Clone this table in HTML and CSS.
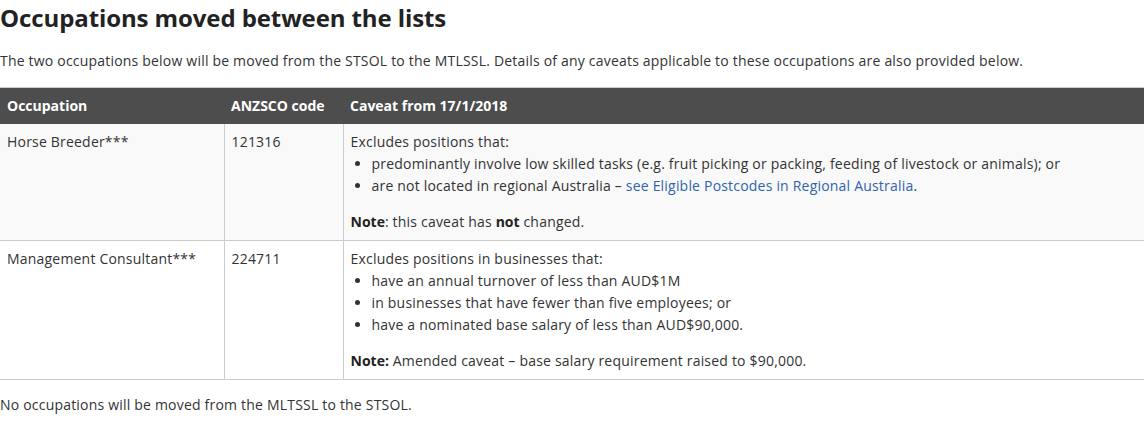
FILE: index.html
```html
<!DOCTYPE html>
<html lang="en">
<head>
<meta charset="utf-8">
<title>Occupations moved between the lists</title>
<link rel="stylesheet" href="styles.css">
</head>
<body>
<h2 class="title">Occupations moved between the lists</h2>
<p class="intro">The two occupations below will be moved from the STSOL to the MTLSSL. Details of any caveats applicable to these occupations are also provided below.</p>
<table class="occ-table">
  <colgroup>
    <col class="c1">
    <col class="c2">
    <col class="c3">
  </colgroup>
  <thead>
    <tr>
      <th>Occupation</th>
      <th>ANZSCO code</th>
      <th>Caveat from 17/1/2018</th>
    </tr>
  </thead>
  <tbody>
    <tr class="alt">
      <td>Horse Breeder***</td>
      <td>121316</td>
      <td>
        <div>Excludes positions that:</div>
        <ul>
          <li>predominantly involve low skilled tasks (e.g. fruit picking or packing, feeding of livestock or animals); or</li>
          <li>are not located in regional Australia – <a href="#">see Eligible Postcodes in Regional Australia</a>.</li>
        </ul>
        <div><strong>Note</strong>: this caveat has <strong>not</strong> changed.</div>
      </td>
    </tr>
    <tr>
      <td>Management Consultant***</td>
      <td>224711</td>
      <td>
        <div>Excludes positions in businesses that:</div>
        <ul>
          <li>have an annual turnover of less than AUD$1M</li>
          <li>in businesses that have fewer than five employees; or</li>
          <li>have a nominated base salary of less than AUD$90,000.</li>
        </ul>
        <div><strong>Note:</strong> Amended caveat – base salary requirement raised to $90,000.</div>
      </td>
    </tr>
  </tbody>
</table>
<p class="outro">No occupations will be moved from the MLTSSL to the STSOL.</p>
</body>
</html>
```
FILE: styles.css
```css
html, body {
  margin: 0;
  padding: 0;
  background: #fff;
}
body {
  font-family: "Open Sans", "Liberation Sans", sans-serif;
  font-size: 14px;
  line-height: 22px;
  letter-spacing: 0.2px;
  color: #333;
  width: 1144px;
  overflow: hidden;
}
.title {
  margin: 0;
  padding-top: 2px;
  font-size: 24px;
  line-height: 32px;
  font-weight: 700;
  letter-spacing: -0.1px;
  color: #222;
}
.intro {
  margin: 16px 0 15px;
}
.occ-table {
  width: 1150px;
  border-collapse: collapse;
  table-layout: fixed;
  border-top: 1px solid #ccc;
}
.c1 { width: 224px; }
.c2 { width: 119px; }
.occ-table th {
  background: #4d4d4d;
  color: #fff;
  font-weight: 700;
  letter-spacing: 0;
  text-align: left;
  padding: 7px 7px;
  line-height: 22px;
}
.occ-table td {
  vertical-align: top;
  padding: 7px 7px;
  border-bottom: 1px solid #ccc;
}
.occ-table td + td {
  border-left: 1px solid #ccc;
}
.occ-table tr.alt td {
  background: #f9f9f9;
}
.occ-table ul {
  margin: 0 0 14px;
  padding-left: 21px;
}
.occ-table a {
  color: #2f63ad;
  text-decoration: none;
}
.occ-table strong {
  font-weight: 700;
  letter-spacing: 0;
  color: #222;
}
.outro {
  margin: 14px 0 0;
}
```
